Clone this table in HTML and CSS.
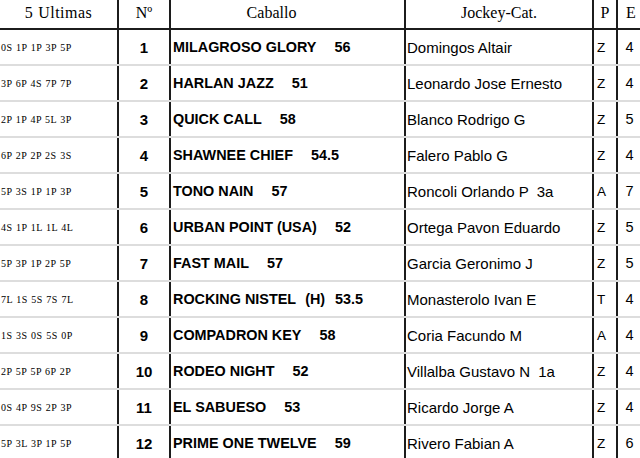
FILE: index.html
```html
<!DOCTYPE html>
<html lang="es">
<head>
<meta charset="utf-8">
<title>Programa</title>
<link rel="stylesheet" href="styles.css">
</head>
<body>
<div class="table">
  <div class="row head">
    <div class="cell c-form">5 Ultimas</div>
    <div class="cell c-num">Nº</div>
    <div class="cell c-horse">Caballo</div>
    <div class="cell c-jockey">Jockey-Cat.</div>
    <div class="cell c-p">P</div>
    <div class="cell c-e">E</div>
  </div>

  <div class="row">
    <div class="cell c-form">0S 1P 1P 3P 5P</div>
    <div class="cell c-num">1</div>
    <div class="cell c-horse">MILAGROSO GLORY<span class="w">56</span></div>
    <div class="cell c-jockey">Domingos Altair</div>
    <div class="cell c-p">Z</div>
    <div class="cell c-e">4</div>
  </div>
  <div class="row">
    <div class="cell c-form">3P 6P 4S 7P 7P</div>
    <div class="cell c-num">2</div>
    <div class="cell c-horse">HARLAN JAZZ<span class="w">51</span></div>
    <div class="cell c-jockey">Leonardo Jose Ernesto</div>
    <div class="cell c-p">Z</div>
    <div class="cell c-e">4</div>
  </div>
  <div class="row">
    <div class="cell c-form">2P 1P 4P 5L 3P</div>
    <div class="cell c-num">3</div>
    <div class="cell c-horse">QUICK CALL<span class="w">58</span></div>
    <div class="cell c-jockey">Blanco Rodrigo G</div>
    <div class="cell c-p">Z</div>
    <div class="cell c-e">5</div>
  </div>
  <div class="row">
    <div class="cell c-form">6P 2P 2P 2S 3S</div>
    <div class="cell c-num">4</div>
    <div class="cell c-horse">SHAWNEE CHIEF<span class="w">54.5</span></div>
    <div class="cell c-jockey">Falero Pablo G</div>
    <div class="cell c-p">Z</div>
    <div class="cell c-e">4</div>
  </div>
  <div class="row">
    <div class="cell c-form">5P 3S 1P 1P 3P</div>
    <div class="cell c-num">5</div>
    <div class="cell c-horse">TONO NAIN<span class="w">57</span></div>
    <div class="cell c-jockey">Roncoli Orlando P<span class="cat">3a</span></div>
    <div class="cell c-p">A</div>
    <div class="cell c-e">7</div>
  </div>
  <div class="row">
    <div class="cell c-form">4S 1P 1L 1L 4L</div>
    <div class="cell c-num">6</div>
    <div class="cell c-horse">URBAN POINT (USA)<span class="w">52</span></div>
    <div class="cell c-jockey">Ortega Pavon Eduardo</div>
    <div class="cell c-p">Z</div>
    <div class="cell c-e">5</div>
  </div>
  <div class="row">
    <div class="cell c-form">5P 3P 1P 2P 5P</div>
    <div class="cell c-num">7</div>
    <div class="cell c-horse">FAST MAIL<span class="w">57</span></div>
    <div class="cell c-jockey">Garcia Geronimo J</div>
    <div class="cell c-p">Z</div>
    <div class="cell c-e">5</div>
  </div>
  <div class="row">
    <div class="cell c-form">7L 1S 5S 7S 7L</div>
    <div class="cell c-num">8</div>
    <div class="cell c-horse">ROCKING NISTEL<span class="tag">(H)</span><span class="w w-tight">53.5</span></div>
    <div class="cell c-jockey">Monasterolo Ivan E</div>
    <div class="cell c-p">T</div>
    <div class="cell c-e">4</div>
  </div>
  <div class="row">
    <div class="cell c-form">1S 3S 0S 5S 0P</div>
    <div class="cell c-num">9</div>
    <div class="cell c-horse">COMPADRON KEY<span class="w">58</span></div>
    <div class="cell c-jockey">Coria Facundo M</div>
    <div class="cell c-p">A</div>
    <div class="cell c-e">4</div>
  </div>
  <div class="row">
    <div class="cell c-form">2P 5P 5P 6P 2P</div>
    <div class="cell c-num">10</div>
    <div class="cell c-horse">RODEO NIGHT<span class="w">52</span></div>
    <div class="cell c-jockey">Villalba Gustavo N<span class="cat">1a</span></div>
    <div class="cell c-p">Z</div>
    <div class="cell c-e">4</div>
  </div>
  <div class="row">
    <div class="cell c-form">0S 4P 9S 2P 3P</div>
    <div class="cell c-num">11</div>
    <div class="cell c-horse">EL SABUESO<span class="w">53</span></div>
    <div class="cell c-jockey">Ricardo Jorge A</div>
    <div class="cell c-p">Z</div>
    <div class="cell c-e">4</div>
  </div>
  <div class="row">
    <div class="cell c-form">5P 3L 3P 1P 5P</div>
    <div class="cell c-num">12</div>
    <div class="cell c-horse">PRIME ONE TWELVE<span class="w">59</span></div>
    <div class="cell c-jockey">Rivero Fabian A</div>
    <div class="cell c-p">Z</div>
    <div class="cell c-e">6</div>
  </div>
</div>
</body>
</html>
```

FILE: styles.css
```css
* {
  box-sizing: border-box;
}

html, body {
  margin: 0;
  padding: 0;
  background: #ffffff;
}

body {
  width: 640px;
  height: 458px;
  overflow: hidden;
  color: #000000;
  font-family: "Liberation Sans", Arial, sans-serif;
}

.table {
  display: flex;
  flex-direction: column;
}

.row {
  display: grid;
  grid-template-columns: 119px 52px 235px 188px 24px 22px;
  height: 36px;
  border-bottom: 2px solid #dddddd;
  flex: none;
}

.row.head {
  height: 30px;
  border-bottom: 2px solid #1c1c1c;
}

.cell {
  display: flex;
  align-items: center;
  white-space: nowrap;
  overflow: hidden;
  border-right: 2px solid #1c1c1c;
}

.cell.c-e {
  border-right: none;
}

.head .cell {
  justify-content: center;
  font-family: "Liberation Serif", "Times New Roman", serif;
  font-size: 16px;
  font-weight: normal;
  padding: 0 0 2px 0;
}

.head .c-horse {
  padding-right: 32px;
}

.head .c-e {
  padding-left: 4px;
}

.c-form {
  font-family: "Liberation Serif", "Times New Roman", serif;
  font-size: 10px;
  letter-spacing: 0.5px;
  word-spacing: 0.5px;
  padding-left: 1px;
}

.c-num {
  justify-content: center;
  font-weight: bold;
  font-size: 15px;
}

.c-horse {
  font-weight: bold;
  font-size: 14.4px;
  padding-left: 2px;
}

.w {
  margin-left: 18px;
}

.w.w-tight {
  margin-left: 10px;
}

.tag {
  margin-left: 9px;
}

.c-jockey {
  font-size: 15px;
  padding-left: 1px;
}

.cat {
  margin-left: 8px;
}

.c-p {
  font-size: 13.5px;
  padding-left: 3px;
}

.c-e {
  justify-content: center;
  font-size: 14.5px;
  padding-left: 1px;
}
```
